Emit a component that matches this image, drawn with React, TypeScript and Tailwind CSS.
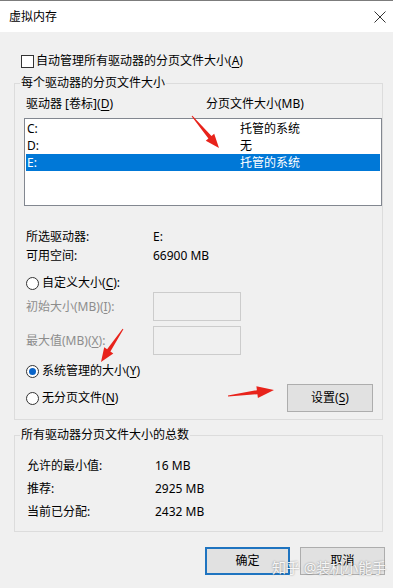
import React from "react";

const FONT = '"Noto Sans", "Noto Sans CJK SC", sans-serif';

function U({ c }: { c: string }) {
  return (
    <>
      (<span className="underline underline-offset-2">{c}</span>)
    </>
  );
}

function arrowPts(
  x1: number,
  y1: number,
  x2: number,
  y2: number,
  headLen: number,
  headW: number,
  neckW: number,
  tailW: number
) {
  const dx = x2 - x1;
  const dy = y2 - y1;
  const L = Math.hypot(dx, dy);
  const ux = dx / L;
  const uy = dy / L;
  const nx = -uy;
  const ny = ux;
  const cx = x2 - ux * headLen;
  const cy = y2 - uy * headLen;
  const p = (x: number, y: number) => `${x.toFixed(1)},${y.toFixed(1)}`;
  return [
    p(x1 + (nx * tailW) / 2, y1 + (ny * tailW) / 2),
    p(cx + (nx * neckW) / 2, cy + (ny * neckW) / 2),
    p(cx + (nx * headW) / 2, cy + (ny * headW) / 2),
    p(x2, y2),
    p(cx - (nx * headW) / 2, cy - (ny * headW) / 2),
    p(cx - (nx * neckW) / 2, cy - (ny * neckW) / 2),
    p(x1 - (nx * tailW) / 2, y1 - (ny * tailW) / 2),
  ].join(" ");
}

function Radio({ checked }: { checked?: boolean }) {
  return (
    <span className="w-[13px] h-[13px] rounded-full border border-[#333333] bg-white flex items-center justify-center shrink-0">
      {checked && <span className="w-[7px] h-[7px] rounded-full bg-[#0a64c8]" />}
    </span>
  );
}

export default function App() {
  return (
    <div
      className="relative w-[393px] h-[588px] overflow-hidden bg-[#f0f0f0] text-[12px] leading-[16px] text-black"
      style={{ fontFamily: FONT }}
    >
      {/* Title bar */}
      <div className="h-[32px] bg-white border-t border-[#7c7c7c] flex items-center justify-between pl-[9px] pr-[5px]">
        <span className="text-[12px]">虚拟内存</span>
        <svg width="14" height="14" viewBox="0 0 14 14" className="mr-[1px]">
          <path d="M1.5 1.5 L12.5 12.5 M12.5 1.5 L1.5 12.5" stroke="#333" strokeWidth="1" fill="none" />
        </svg>
      </div>

      {/* Auto manage checkbox */}
      <div className="mt-[21px] ml-[21px] flex items-center h-[16px] gap-[2px]">
        <span className="w-[13px] h-[13px] border border-[#333333] bg-white shrink-0" />
        <span>
          自动管理所有驱动器的分页文件大小<U c="A" />
        </span>
      </div>

      {/* Group 1 */}
      <fieldset className="mt-[6px] ml-[14px] w-[369px] border border-[#dcdcdc] p-0 m-0">
        <legend className="ml-[5px] px-[1px] leading-[16px]">每个驱动器的分页文件大小</legend>
        <div className="pt-[5px] pl-[9px] pb-[7px] flex flex-col">
          <div className="flex h-[16px]">
            <span className="pl-[2px] w-[182px]">
              驱动器 [卷标]<U c="D" />
            </span>
            <span>分页文件大小(MB)</span>
          </div>

          <div className="mt-[6px] w-[358px] h-[88px] border border-[#828790] bg-white p-[1px] flex flex-col">
            <div className="h-[17px] flex items-center pl-[1px]">
              <span className="w-[213px]">C:</span>
              <span>托管的系统</span>
            </div>
            <div className="h-[17px] flex items-center pl-[1px]">
              <span className="w-[213px]">D:</span>
              <span>无</span>
            </div>
            <div className="h-[17px] flex items-center pl-[1px] bg-[#0078d7] text-white">
              <span className="w-[213px]">E:</span>
              <span>托管的系统</span>
            </div>
          </div>

          <div className="mt-[23px] pl-[2px] flex h-[16px]">
            <span className="w-[127px]">所选驱动器:</span>
            <span>E:</span>
          </div>
          <div className="mt-[3px] pl-[2px] flex h-[16px]">
            <span className="w-[127px]">可用空间:</span>
            <span>66900 MB</span>
          </div>

          <div className="mt-[11px] pl-[2px] flex items-center h-[16px] gap-[3px]">
            <Radio />
            <span>
              自定义大小<U c="C" />:
            </span>
          </div>

          <div className="mt-[1px] pl-[2px] flex items-center h-[29px]">
            <span className="w-[127px] text-[#8d8d8d]">
              初始大小(MB)<U c="I" />:
            </span>
            <span className="w-[88px] h-[29px] border border-[#cccccc]" />
          </div>
          <div className="mt-[5px] pl-[2px] flex items-center h-[29px]">
            <span className="w-[127px] text-[#8d8d8d]">
              最大值(MB)<U c="X" />:
            </span>
            <span className="w-[88px] h-[29px] border border-[#cccccc]" />
          </div>

          <div className="mt-[8px] pl-[2px] flex items-center h-[16px] gap-[3px]">
            <Radio checked />
            <span>
              系统管理的大小<U c="Y" />
            </span>
          </div>

          <div className="mt-[5px] pl-[2px] flex items-center h-[28px]">
            <div className="flex items-center gap-[3px]">
              <Radio />
              <span>
                无分页文件<U c="N" />
              </span>
            </div>
            <button className="ml-auto mr-[9px] w-[86px] h-[28px] bg-[#e1e1e1] border border-[#adadad] flex items-center justify-center">
              设置<U c="S" />
            </button>
          </div>
        </div>
      </fieldset>

      {/* Group 2 */}
      <fieldset className="mt-[7px] ml-[14px] w-[369px] border border-[#dcdcdc] p-0 m-0">
        <legend className="ml-[5px] px-[1px] leading-[16px]">所有驱动器分页文件大小的总数</legend>
        <div className="pt-[15px] pl-[12px] pb-[11px] flex flex-col gap-[7px]">
          <div className="flex h-[16px]">
            <span className="w-[128px]">允许的最小值:</span>
            <span>16 MB</span>
          </div>
          <div className="flex h-[16px]">
            <span className="w-[128px]">推荐:</span>
            <span>2925 MB</span>
          </div>
          <div className="flex h-[16px]">
            <span className="w-[128px]">当前已分配:</span>
            <span>2432 MB</span>
          </div>
        </div>
      </fieldset>

      {/* Buttons */}
      <div className="mt-[15px] pr-[8px] flex justify-end gap-[10px]">
        <button className="w-[85px] h-[28px] bg-[#e1e1e1] border-2 border-[#1f74c0] flex items-center justify-center">
          确定
        </button>
        <button className="w-[85px] h-[28px] bg-[#e1e1e1] border border-[#adadad] flex items-center justify-center">
          取消
        </button>
      </div>

      {/* Watermark */}
      <div
        className="absolute left-[272px] top-[559px] text-[14px] leading-[18px] text-white/90 whitespace-nowrap pointer-events-none"
        style={{ textShadow: "0 0 2px rgba(0,0,0,0.45)" }}
      >
        知乎 @装机小能手
      </div>

      {/* Red annotation arrows */}
      <svg className="absolute left-0 top-0 pointer-events-none" width="393" height="588" viewBox="0 0 393 588">
        <polygon points={arrowPts(192, 116, 219, 148, 14, 11, 4, 1)} fill="#e8231b" />
        <polygon points={arrowPts(123, 329, 101, 362, 14, 11, 4, 1)} fill="#e8231b" />
        <polygon points={arrowPts(228, 396, 274, 390, 17, 12, 4, 1)} fill="#e8231b" />
      </svg>
    </div>
  );
}
